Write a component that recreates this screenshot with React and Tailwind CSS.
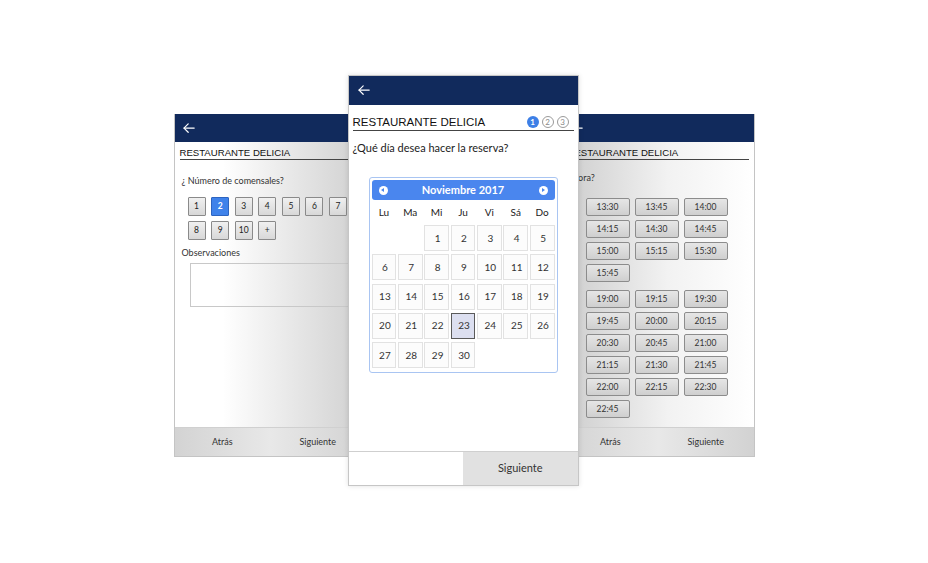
import React from "react";

const NAVY = "bg-[#112a5c]";
const SANS = "font-['Lato','Noto_Sans',sans-serif]";
const TITLE = "font-['Liberation_Sans',Arial,sans-serif]";

const timesA = ["13:30", "13:45", "14:00", "14:15", "14:30", "14:45", "15:00", "15:15", "15:30", "15:45"];
const timesB = [
    "19:00", "19:15", "19:30", "19:45", "20:00", "20:15", "20:30", "20:45",
    "21:00", "21:15", "21:30", "21:45", "22:00", "22:15", "22:30", "22:45",
];

// Nov 2017 starts on a Wednesday
const days = [null, null, ...Array.from({ length: 30 }, (_, i) => i + 1)];
const weekdays = ["Lu", "Ma", "Mi", "Ju", "Vi", "Sá", "Do"];

function BackArrow({ size = 12 }) {
    return (
        <svg width={size} height={size * 0.85} viewBox="0 0 12 10" fill="none" stroke="white" strokeWidth="1.2" strokeLinecap="round" strokeLinejoin="round">
            <path d="M11.2 5H1" />
            <path d="M5.2 0.8L1 5l4.2 4.2" />
        </svg>
    );
}

function Header({ h, pad }) {
    return (
        <div className={`${NAVY} ${h} flex items-center ${pad} shrink-0`}>
            <BackArrow />
        </div>
    );
}

function SmallTitle() {
    return (
        <div className={`${TITLE} mx-[5px] mt-[5px] border-b-[1.5px] border-[#444] text-[9.6px] leading-[12px] text-[#111]`}>
            RESTAURANTE DELICIA
        </div>
    );
}

function SideFooter() {
    return (
        <div className={`${SANS} h-[29px] shrink-0 flex items-center text-[9px] text-[#333] bg-linear-to-r from-[#d3d3d3] via-[#e8e8e8] to-[#d2d2d2] border-t border-[#d0d0d0]`}>
            <div className="flex-1 text-center">Atrás</div>
            <div className="flex-1 text-center">Siguiente</div>
        </div>
    );
}

function LeftPhone() {
    const nums = ["1", "2", "3", "4", "5", "6", "7", "8", "9", "10", "+"];
    return (
        <div className="w-[192px] h-[343px] mt-[114px] -mr-[18px] flex flex-col border-l border-b border-[#c4c4c4]">
            <Header h="h-[28px]" pad="pl-[8px]" />
            <div className="flex-1 flex flex-col bg-linear-to-r from-white from-25% to-[#cfcfcf]">
                <SmallTitle />
                <div className={`${SANS} ml-[7px] mt-[15px] text-[9px] leading-[12px] text-[#333]`}>¿ Número de comensales?</div>
                <div className="ml-[13px] mt-[10px] flex flex-wrap w-[170px] gap-x-[5.6px] gap-y-[5px]">
                    {nums.map((n) => (
                        <div
                            key={n}
                            className={`${SANS} w-[18px] h-[19px] flex items-center justify-center text-[8.5px] rounded-[1px] border ${
                                n === "2"
                                    ? "bg-[#3f82ea] border-[#2d64c0] text-white font-bold"
                                    : "bg-linear-to-b from-[#f0f0f0] to-[#d8d8d8] border-[#8a8a8a] text-[#222]"
                            }`}
                        >
                            {n}
                        </div>
                    ))}
                </div>
                <div className={`${SANS} ml-[7px] mt-[7px] text-[9px] leading-[12px] text-[#333]`}>Observaciones</div>
                <div className="ml-[15px] mr-[2px] mt-[4px] h-[44px] border border-[#c8c8c8]"></div>
            </div>
            <SideFooter />
        </div>
    );
}

function TimeButton({ t }) {
    return (
        <div className={`${SANS} w-[44px] h-[18px] flex items-center justify-center text-[8.5px] text-[#333] rounded-[2px] border border-[#8c8c8c] bg-linear-to-b from-[#e6e6e6] to-[#cfcfcf]`}>
            {t}
        </div>
    );
}

function RightPhone() {
    return (
        <div className="w-[192px] h-[343px] mt-[114px] -ml-[16px] flex flex-col border-r border-b border-[#c4c4c4]">
            <Header h="h-[28px]" pad="pl-[8px]" />
            <div className="flex-1 flex flex-col bg-linear-to-r from-[#cdcdcd] via-[#f2f2f2] via-55% to-white">
                <SmallTitle />
                <div className={`${SANS} ml-[5px] mt-[12px] text-[9px] leading-[12px] text-[#333]`}>¿Hora?</div>
                <div className="ml-[23px] mt-[14px] grid grid-cols-[44px_44px_44px] gap-x-[5px] gap-y-[4px]">
                    {timesA.map((t) => <TimeButton key={t} t={t} />)}
                </div>
                <div className="ml-[23px] mt-[8px] grid grid-cols-[44px_44px_44px] gap-x-[5px] gap-y-[4px]">
                    {timesB.map((t) => <TimeButton key={t} t={t} />)}
                </div>
            </div>
            <SideFooter />
        </div>
    );
}

function StepDot({ n, active }) {
    return (
        <div
            className={`w-[12px] h-[12px] rounded-full flex items-center justify-center text-[8px] leading-none ${SANS} ${
                active ? "bg-[#3d7fe6] text-white font-bold" : "border border-[#9a9a9a] text-[#888]"
            }`}
        >
            {n}
        </div>
    );
}

function Calendar() {
    return (
        <div className={`${SANS} mx-[20px] border border-[#a9c5f2] rounded-[3px] p-[2px]`}>
            <div className="h-[20px] bg-[#4a86ee] rounded-[3px] flex items-center justify-between px-[7px]">
                <div className="w-[9px] h-[9px] rounded-full bg-white flex items-center justify-center">
                    <div className="w-0 h-0 border-y-[2.5px] border-y-transparent border-r-[3px] border-r-[#4a86ee] -ml-[1px]"></div>
                </div>
                <span className="text-white font-bold text-[11px]">Noviembre 2017</span>
                <div className="w-[9px] h-[9px] rounded-full bg-white flex items-center justify-center">
                    <div className="w-0 h-0 border-y-[2.5px] border-y-transparent border-l-[3px] border-l-[#4a86ee] ml-[1px]"></div>
                </div>
            </div>
            <div className="grid grid-cols-7 gap-x-[1.5px] h-[25px] items-center">
                {weekdays.map((d) => (
                    <div key={d} className="text-center text-[10px] text-[#222]">{d}</div>
                ))}
            </div>
            <div className="grid grid-cols-7 gap-x-[1.5px] gap-y-[3.25px] pb-[2px]">
                {days.map((d, i) =>
                    d === null ? (
                        <div key={`e${i}`} className="h-[26px]"></div>
                    ) : (
                        <div
                            key={d}
                            className={`h-[26px] flex items-center justify-center pl-[2px] text-[10px] text-[#333] border ${
                                d === 23 ? "bg-[#dcdff0] border-[#5a5a5a]" : "bg-[#fcfcfc] border-[#e2e2e2]"
                            }`}
                        >
                            {d}
                        </div>
                    )
                )}
            </div>
        </div>
    );
}

function CenterPhone() {
    return (
        <div className="relative z-10 w-[231px] h-[411px] mt-[75px] flex flex-col bg-white border border-[#c6c6c6] shadow-[0_0_5px_rgba(0,0,0,0.12)]">
            <Header h="h-[29px]" pad="pl-[9px]" />
            <div className="mx-[4px] mt-[10px] flex items-center justify-between border-b-[1.5px] border-[#444] pb-[1px]">
                <span className={`${TITLE} text-[11.5px] text-[#111] leading-[14px]`}>RESTAURANTE DELICIA</span>
                <div className="flex gap-[3px] pr-[5px]">
                    <StepDot n="1" active />
                    <StepDot n="2" />
                    <StepDot n="3" />
                </div>
            </div>
            <div className={`${SANS} ml-[4px] mt-[9px] text-[11px] leading-[16px] text-[#222]`}>¿Qué día desea hacer la reserva?</div>
            <div className="mt-[21px]">
                <Calendar />
            </div>
            <div className="flex-1"></div>
            <div className={`${SANS} h-[34px] flex border-t border-[#cfcfcf] text-[11px] text-[#333]`}>
                <div className="flex-1 bg-white"></div>
                <div className="flex-1 bg-[#e1e1e1] flex items-center justify-center">Siguiente</div>
            </div>
        </div>
    );
}

export default function App() {
    return (
        <div className="w-full h-[563px] bg-white flex justify-center items-start overflow-hidden">
            <LeftPhone />
            <CenterPhone />
            <RightPhone />
        </div>
    );
}
